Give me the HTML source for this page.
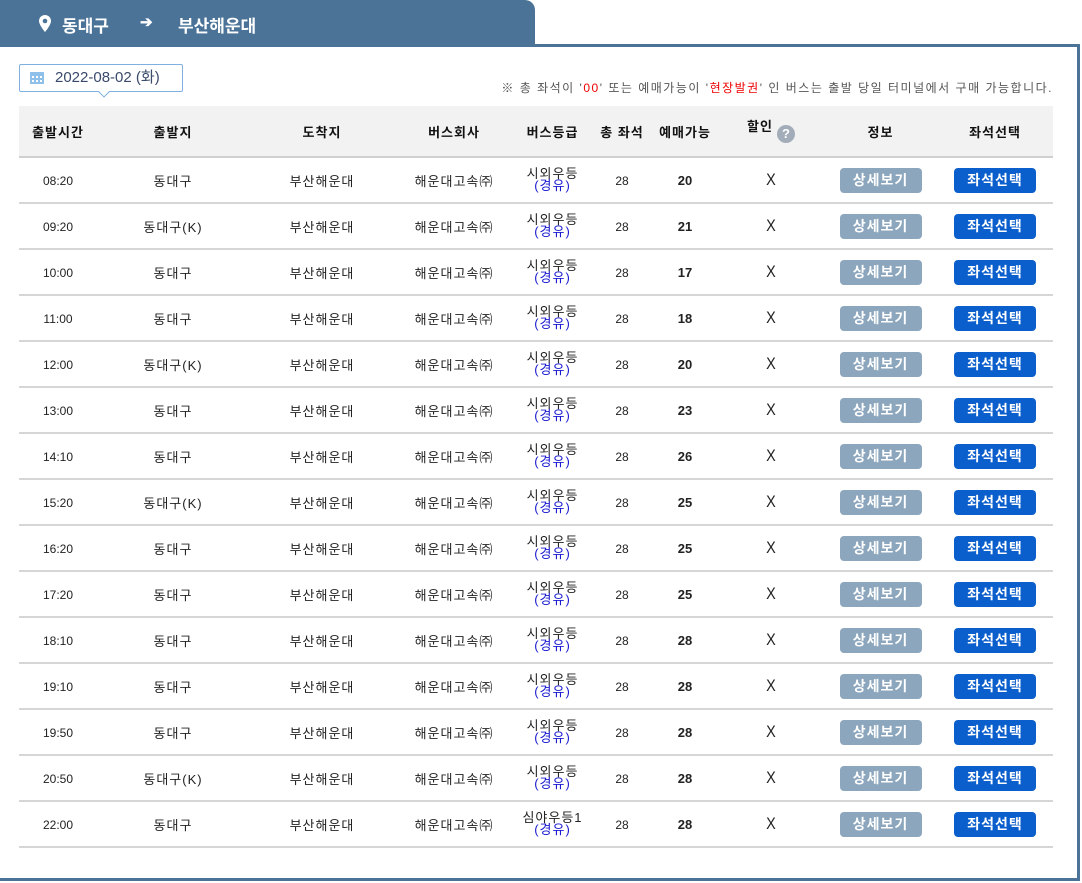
<!DOCTYPE html>
<html><head><meta charset="utf-8"><style>
*{margin:0;padding:0;box-sizing:border-box}
body{width:1082px;height:883px;background:#fff;position:relative;font-family:"Liberation Sans","Noto Sans CJK KR",sans-serif;overflow:hidden}
.tab{position:absolute;left:0;top:0;width:535px;height:47px;background:#4a7397;border-top-right-radius:10px}
.topline{position:absolute;left:535px;top:44px;width:545px;height:3px;background:#4a7397}
.rline{position:absolute;left:1077px;top:44px;width:3px;height:837px;background:#4a7397}
.bline{position:absolute;left:0;top:878px;width:1080px;height:3px;background:#4a7397}
.tt{position:absolute;top:12px;color:#fff;font-size:17px;font-weight:bold}
.date{position:absolute;left:19px;top:64px;width:164px;height:28px;border:1px solid #7fb0e0;border-radius:2px;font-size:15px;color:#3a4a6a;line-height:26px;padding-left:35px}
.date:after{content:"";position:absolute;left:80px;bottom:-5px;width:7px;height:7px;background:#fff;border-right:1px solid #7fb0e0;border-bottom:1px solid #7fb0e0;transform:rotate(45deg)}
.note{position:absolute;right:29px;top:79px;font-size:12px;color:#555;letter-spacing:1.5px;white-space:nowrap}
.note b{color:#e00;font-weight:normal}
table{position:absolute;left:19px;top:106px;width:1034px;border-collapse:collapse;table-layout:fixed}
th{background:#f2f2f2;height:51px;font-size:13px;color:#111;font-weight:bold;border-bottom:2px solid #d0d0d0;letter-spacing:1px;white-space:nowrap}
td{height:46px;border-bottom:2px solid #d6d6d6;text-align:center;font-size:13px;color:#222;letter-spacing:1px}
td.t{font-size:12px;letter-spacing:0;padding-top:2px}
.g{line-height:12px;font-size:13px}
.g span{color:#1a1ad0;display:block}
.x{font-size:17px;font-weight:normal;letter-spacing:0;transform:scaleX(0.85)}
.btn{display:inline-block;width:82px;height:25px;line-height:25px;border-radius:4px;color:#fff;font-weight:bold;font-size:14px;letter-spacing:1px}
.b1{background:#8ca6bd}.b2{background:#0b5fcc}
.q{display:inline-block;width:18px;height:18px;border-radius:50%;background:#a3adb9;color:#fff;font-size:13px;line-height:18px;vertical-align:-4px;margin-left:4px;letter-spacing:0}
</style></head><body>
<div class="tab"></div><div class="topline"></div><div class="rline"></div><div class="bline"></div>
<svg style="position:absolute;left:38px;top:14px" width="14" height="19" viewBox="0 0 14 19"><path d="M7 1a6 6 0 0 0-6 6c0 4 6 11 6 11s6-7 6-11a6 6 0 0 0-6-6z" fill="#fff"/><circle cx="7" cy="7" r="2.3" fill="#4a7397"/></svg>
<div class="tt" style="left:62px">동대구</div>
<div class="tt" style="left:140px;font-size:15px;top:13px">➔</div>
<div class="tt" style="left:178px">부산해운대</div>
<div class="date"><svg style="position:absolute;left:10px;top:6px" width="14" height="13" viewBox="0 0 14 13"><rect x="0" y="1" width="14" height="12" fill="#8ec0ea"/><g fill="#fff"><rect x="2" y="5" width="2" height="2"/><rect x="6" y="5" width="2" height="2"/><rect x="10" y="5" width="2" height="2"/><rect x="2" y="9" width="2" height="2"/><rect x="6" y="9" width="2" height="2"/><rect x="10" y="9" width="2" height="2"/></g></svg>2022-08-02 (화)</div>
<div class="note">※ 총 좌석이 '<b>00</b>' 또는 예매가능이 '<b>현장발권</b>' 인 버스는 출발 당일 터미널에서 구매 가능합니다.</div>
<table>
<colgroup><col style="width:78px"><col style="width:152px"><col style="width:146px"><col style="width:118px"><col style="width:79px"><col style="width:60px"><col style="width:66px"><col style="width:106px"><col style="width:113px"><col style="width:116px"></colgroup>
<tr><th>출발시간</th><th>출발지</th><th>도착지</th><th>버스회사</th><th>버스등급</th><th>총 좌석</th><th>예매가능</th><th><span style="position:relative;top:-3px">할인</span><span class="q">?</span></th><th>정보</th><th>좌석선택</th></tr>
<tbody id="b"></tbody>
</table>
<script>
var d=[["08:20","동대구","20"],["09:20","동대구(K)","21"],["10:00","동대구","17"],["11:00","동대구","18"],["12:00","동대구(K)","20"],["13:00","동대구","23"],["14:10","동대구","26"],["15:20","동대구(K)","25"],["16:20","동대구","25"],["17:20","동대구","25"],["18:10","동대구","28"],["19:10","동대구","28"],["19:50","동대구","28"],["20:50","동대구(K)","28"],["22:00","동대구","28"]];
var h="";d.forEach(function(r,i){h+='<tr><td class="t">'+r[0]+'</td><td>'+r[1]+'</td><td>부산해운대</td><td>해운대고속㈜</td><td class="g">'+(i==14?'심야우등1':'시외우등')+'<span>(경유)</span></td><td class="t">28</td><td style="font-weight:bold;letter-spacing:0">'+r[2]+'</td><td class="x">X</td><td><span class="btn b1">상세보기</span></td><td><span class="btn b2">좌석선택</span></td></tr>'});
document.getElementById("b").innerHTML=h;
</script>
</body></html>
